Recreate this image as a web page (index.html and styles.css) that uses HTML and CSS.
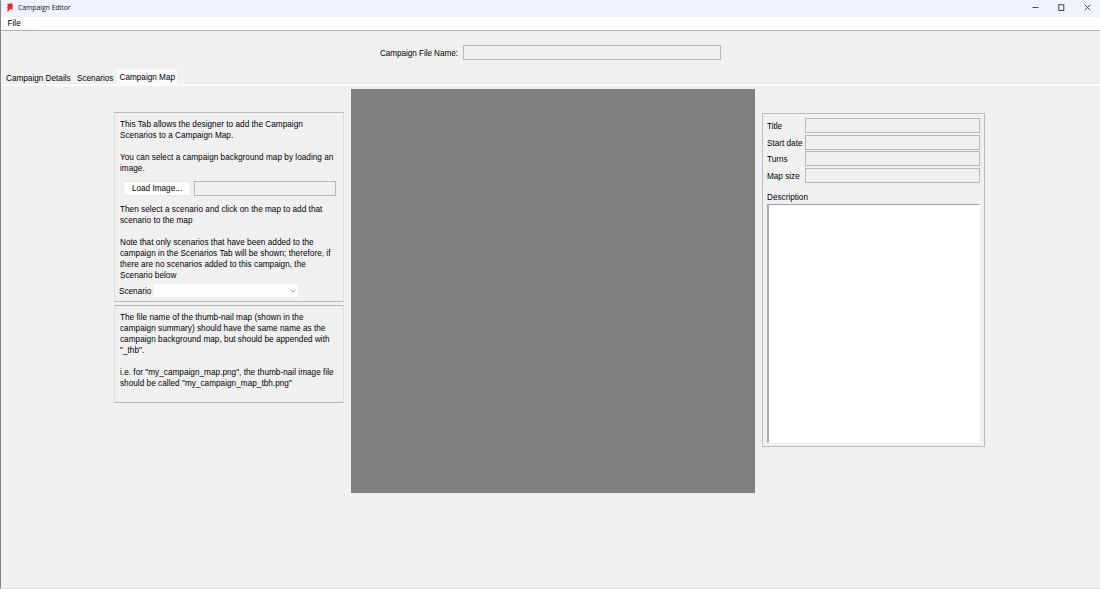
FILE: index.html
```html
<!DOCTYPE html>
<html lang="en">
<head>
<meta charset="utf-8">
<title>Campaign Editor</title>
<link rel="stylesheet" href="styles.css">
</head>
<body>
<div class="window">
  <header class="titlebar">
    <svg class="logo" width="8" height="9" viewBox="0 0 8 9"><path d="M1.2 1 5.5.3 6.7 1.2V6.8L4.8 6 3.6 6.5 2.6 8.3 1 8.5 1.8 5.8 1 4.5 2 3z" fill="#f5222d"/></svg>
    <span class="title">Campaign Editor</span>
    <div class="controls">
      <svg width="7" height="7" viewBox="0 0 7 7"><path d="M.5 3.5h6"/></svg>
      <svg width="7" height="7" viewBox="0 0 7 7"><rect x=".8" y=".7" width="5" height="5.8"/></svg>
      <svg width="7" height="7" viewBox="0 0 7 7"><path d="M.7.7l5.6 5.6M6.3.7.7 6.3"/></svg>
    </div>
  </header>
  <nav class="menubar"><span>File</span></nav>
  <div class="filename"><label>Campaign File Name:</label><div class="field"></div></div>
  <div class="tabs"><span class="tab details">Campaign Details</span><span class="tab scenarios">Scenarios</span><span class="tab active">Campaign Map</span></div>
  <main class="content">
    <section class="left">
      <div class="panel steps">
        <p>This Tab allows the designer to add the Campaign<br>Scenarios to a Campaign Map.<br><br>You can select a campaign background map by loading an<br>image.</p>
        <div class="load"><button class="button">Load Image...</button><div class="field"></div></div>
        <p>Then select a scenario and click on the map to add that<br>scenario to the map<br><br>Note that only scenarios that have been added to the<br>campaign in the Scenarios Tab will be shown; therefore, if<br>there are no scenarios added to this campaign, the<br>Scenario below</p>
        <div class="choose"><label>Scenario</label><div class="combo"><svg width="6" height="4" viewBox="0 0 6 4"><path d="M.6.7 3 3 5.4.7"/></svg></div></div>
      </div>
      <div class="panel note">
        <p>The file name of the thumb-nail map (shown in the<br>campaign summary) should have the same name as the<br>campaign background map, but should be appended with<br>"_thb".<br><br>i.e. for "my_campaign_map.png", the thumb-nail image file<br>should be called "my_campaign_map_tbh.png"</p>
      </div>
    </section>
    <div class="map"></div>
    <section class="panel info">
      <div class="row"><label>Title</label><div class="field"></div></div>
      <div class="row"><label>Start date</label><div class="field"></div></div>
      <div class="row"><label>Turns</label><div class="field"></div></div>
      <div class="row"><label>Map size</label><div class="field"></div></div>
      <label class="desc">Description</label>
      <div class="textarea"></div>
    </section>
  </main>
</div>
</body>
</html>
```
FILE: styles.css
```css
* { box-sizing: border-box; }
body { margin: 0; }
.window {
  width: 1100px; height: 589px; overflow: hidden;
  display: flex; flex-direction: column;
  background: #f0f0f0; color: #000;
  border-left: 1px solid #858585; border-bottom: 1px solid #dedede;
  font: 8.2px/11px "Liberation Sans", Arial, sans-serif;
}
.titlebar { flex: none; height: 17px; display: flex; align-items: center; padding: 0 9px 2px 5px; background: #eff3fb; }
.logo { margin-right: 4px; }
.title { font: 6.8px/10px "Open Sans", sans-serif; color: #111; }
.controls { margin-left: auto; display: flex; gap: 19px; }
.controls svg { fill: none; stroke: #333; stroke-width: 0.9; }
.menubar { flex: none; height: 14px; padding: 1px 0 0 6.5px; background: #fff; border-bottom: 1px solid #b4b4b4; }
.filename { flex: none; height: 39px; display: flex; padding: 14px 0 0 379px; }
.filename label { width: 83px; padding-top: 3px; letter-spacing: -0.07px; }
.field { height: 15px; border: 1px solid #b9b9b9; }
.filename .field { width: 258px; }
.tabs { flex: none; height: 16px; display: flex; align-items: flex-end; border-bottom: 2px solid #fbfbfb; }
.tab { height: 14px; padding-top: 3px; white-space: nowrap; }
.details { width: 75px; padding-left: 5px; }
.scenarios { width: 41px; padding-left: 1px; }
.active { height: 15px; width: 60px; padding-left: 2.5px; background: #fafafa; }
.content { display: flex; align-items: flex-start; padding: 3px 0 0 113px; }
.left { width: 237px; padding-top: 23px; }
.panel { border: 1px solid #dcdcdc; border-top-color: #b9b9b9; border-bottom-color: #b9b9b9; }
.left .panel { width: 230px; padding: 6px 0 0 5px; }
.panel p { margin: 0; white-space: nowrap; letter-spacing: 0.03px; }
.steps { height: 190px; }
.load { display: flex; height: 30px; padding: 7px 0 0 3px; gap: 3px; }
.button { width: 68px; height: 15px; padding: 0; border: 1px solid #e8e8e8; border-radius: 2px; background: #fdfdfd; color: #000; font: inherit; line-height: 13px; }
.load .field { width: 142px; }
.choose { display: flex; margin: 3px 0 0 -1px; }
.choose label { width: 35px; padding-top: 2px; }
.combo { width: 144px; height: 13px; background: #fdfdfd; display: flex; align-items: center; justify-content: flex-end; padding-right: 2px; }
.combo svg { fill: none; stroke: #a0a0a0; stroke-width: 1; }
.note { height: 98px; margin-top: 3px; }
.map { width: 404px; height: 404px; background: #808080; }
.info { width: 223px; height: 334px; margin: 24px 0 0 7px; padding: 4px; border-color: #bdbdbd; }
.row { display: flex; height: 16.7px; }
.row label { width: 38px; padding-top: 3px; white-space: nowrap; }
.row .field { width: 175px; }
.desc { display: block; height: 19px; padding-top: 7px; }
.textarea { width: 213px; height: 239px; background: #fff; border: 1px solid #fff; border-top-color: #a0a0a0; border-left: 2px solid #aaa; }
```
